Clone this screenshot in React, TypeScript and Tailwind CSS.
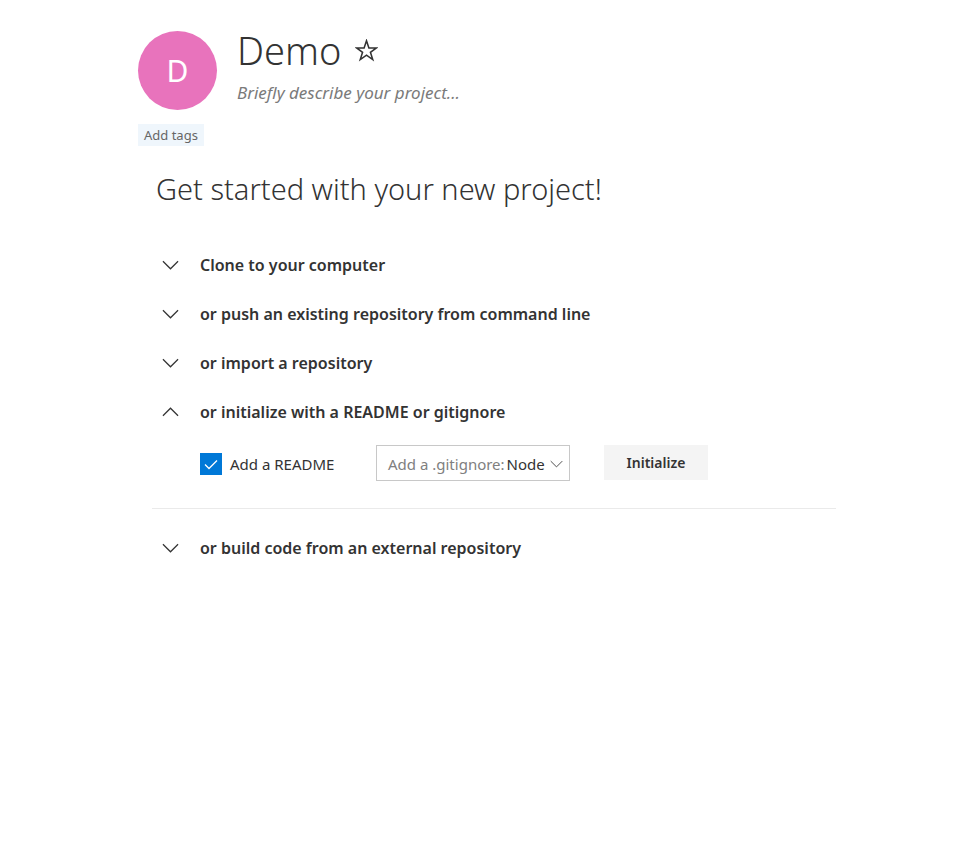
import { useState } from "react";
import clsx from "clsx";

type Section = {
  id: string;
  title: string;
};

const sections: Section[] = [
  { id: "clone", title: "Clone to your computer" },
  { id: "push", title: "or push an existing repository from command line" },
  { id: "import", title: "or import a repository" },
  { id: "init", title: "or initialize with a README or gitignore" },
  { id: "build", title: "or build code from an external repository" },
];

function Chevron({ up, className }: { up?: boolean; className?: string }) {
  return (
    <svg viewBox="0 0 18 10" fill="none" stroke="currentColor" strokeWidth="1.3" className={className} aria-hidden="true">
      <path d={up ? "M1 9 L9 1 L17 9" : "M1 1 L9 9 L17 1"} />
    </svg>
  );
}

function InitForm() {
  const [readme, setReadme] = useState(true);
  const [template, setTemplate] = useState("Node");

  return (
    <form
      className="flex items-start border-b border-[#eaeaea] pt-[9px] pb-[27px] pl-12 text-[#333333]"
      onSubmit={(e) => e.preventDefault()}
    >
      <label className="flex h-9 w-[176px] items-center gap-2 pt-0.5 text-[15px]">
        <span className="grid size-[22px] shrink-0">
          <input
            type="checkbox"
            className="col-start-1 row-start-1 size-[22px] appearance-none border border-[#0078d7] checked:bg-[#0078d7]"
            checked={readme}
            onChange={(e) => setReadme(e.target.checked)}
          />
          {readme && (
            <svg
              viewBox="0 0 22 22"
              fill="none"
              stroke="#ffffff"
              strokeWidth="1.3"
              className="pointer-events-none col-start-1 row-start-1 size-[22px]"
              aria-hidden="true"
            >
              <path d="M5 11.5 L9 15.5 L17 7.5" />
            </svg>
          )}
        </span>
        Add a README
      </label>

      <div className="flex h-9 w-[194px] items-center border border-[#c8c8c8] pt-0.5 pr-1.5 pl-[11px] text-[15px]">
        <label htmlFor="gitignore" className="shrink-0 pr-0.5 text-[#808080]">
          Add a .gitignore:
        </label>
        <select
          id="gitignore"
          className="min-w-0 flex-1 appearance-none bg-transparent outline-none"
          value={template}
          onChange={(e) => setTemplate(e.target.value)}
        >
          <option>Node</option>
          <option>None</option>
        </select>
        <Chevron className="pointer-events-none h-[8px] w-[13px] shrink-0 text-[#444444]" />
      </div>

      <button type="submit" className="ml-[34px] h-[35px] w-[104px] bg-[#f4f4f4] text-sm font-semibold">
        Initialize
      </button>
    </form>
  );
}

export default function App() {
  const [open, setOpen] = useState("init");

  return (
    <main className="mx-auto max-w-[702px] pt-[31px] font-['Noto_Sans','Open_Sans',sans-serif] text-[#333333]">
      <header className="pl-1">
        <div className="flex gap-5">
          <div className="flex size-[79px] shrink-0 items-center justify-center rounded-full bg-[#e873bc] text-[30px] text-white">
            D
          </div>
          <div>
            <div className="flex items-center gap-3.5">
              <h1 className="text-[38px] leading-[38px] font-light">Demo</h1>
              <button aria-label="Add to favorites">
                <svg viewBox="0 0 24 24" fill="none" stroke="currentColor" strokeWidth="1.6" className="size-[23px]">
                  <path d="M12 1.8 L14.5 9.3 H22.4 L16.1 13.9 L18.5 21.5 L12 16.9 L5.5 21.5 L7.9 13.9 L1.6 9.3 H9.5 Z" />
                </svg>
              </button>
            </div>
            <p className="pt-3 text-[17px] leading-6 text-[#7a7a7a] italic">Briefly describe your project...</p>
          </div>
        </div>
        <button className="mt-3.5 block h-[22px] bg-[#eff6fc] px-1.5 pt-0.5 text-[13px] text-[#666666]">Add tags</button>
      </header>

      <section className="pl-[18px]">
        <h2 className="pt-[23px] pb-[31px] pl-1 text-[29px] leading-10 font-light">
          Get started with your new project!
        </h2>
        {sections.map((s) => (
          <div key={s.id} className={clsx(open === s.id && "pb-3.5")}>
            <button
              className="flex h-[49px] w-full items-center gap-[21px] pl-2.5 text-left text-base font-semibold"
              aria-expanded={open === s.id}
              onClick={() => setOpen(open === s.id ? "" : s.id)}
            >
              <Chevron up={open === s.id} className="h-[10px] w-[17px] shrink-0" />
              {s.title}
            </button>
            {open === s.id && s.id === "init" && <InitForm />}
          </div>
        ))}
      </section>
    </main>
  );
}
